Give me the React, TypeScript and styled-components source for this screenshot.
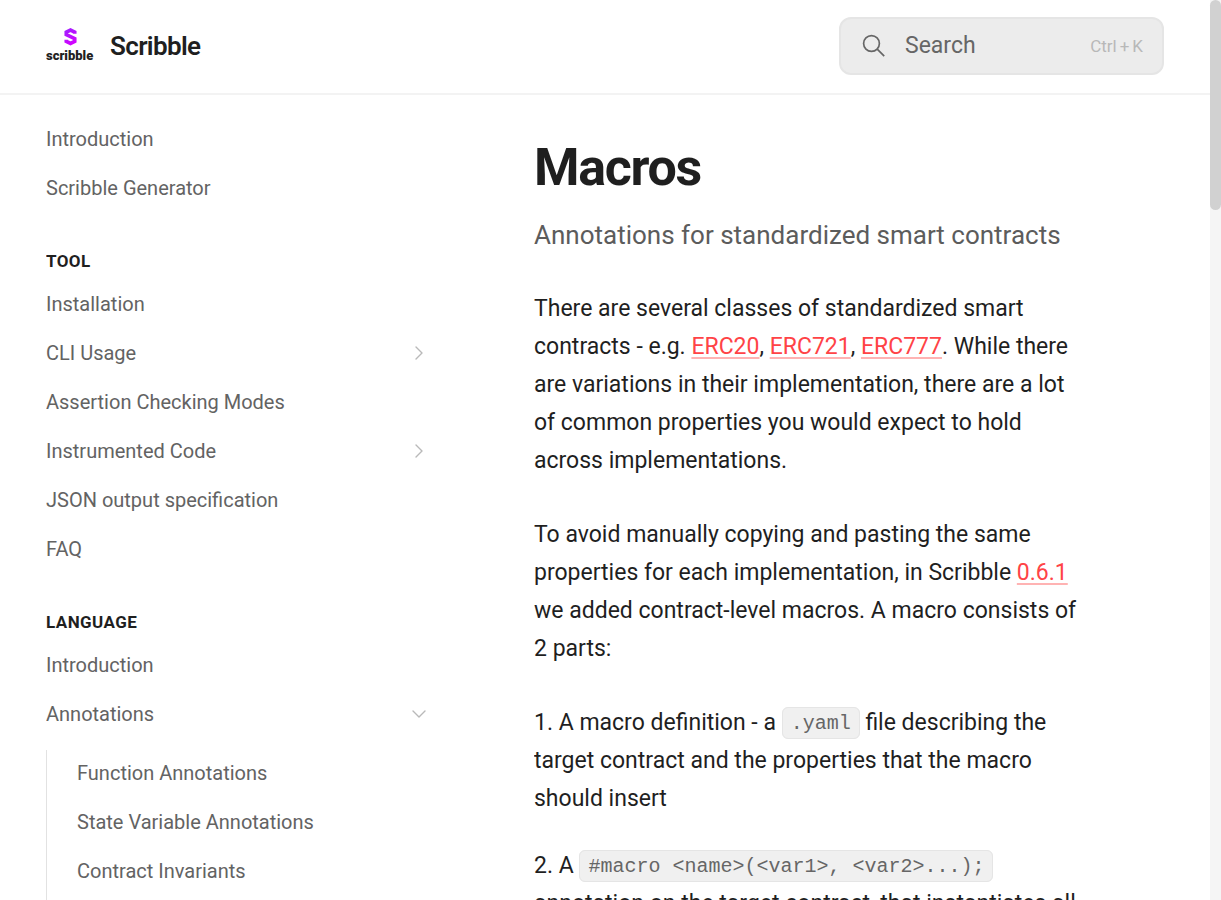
import React from "react";
import styled, { createGlobalStyle } from "styled-components";

const GlobalStyle = createGlobalStyle`
  *, *::before, *::after { box-sizing: border-box; }
  body {
    margin: 0;
    background: #fff;
    color: #1f1f1f;
    font-family: Roboto, sans-serif;
  }
  a { color: inherit; text-decoration: none; }
`;

const Shell = styled.div`
  display: grid;
  grid-template-columns: minmax(0, 1fr) 11px;
  height: 100vh;
`;

const Viewport = styled.div`
  display: flex;
  flex-direction: column;
  min-height: 0;
`;

const ScrollTrack = styled.div`
  background: #f5f5f5;
`;

const ScrollThumb = styled.div`
  height: 210px;
  border-radius: 6px;
  background: #d1d1d1;
`;

const Header = styled.header`
  display: flex;
  flex: none;
  align-items: center;
  justify-content: space-between;
  padding: 17px 46px 18px;
  border-bottom: 2px solid #f3f3f3;
`;

const Brand = styled.a`
  display: flex;
  align-items: center;
  gap: 16px;
`;

const BrandName = styled.span`
  font-size: 26px;
  font-weight: 600;
  line-height: 32px;
  letter-spacing: -0.025em;
`;

const SearchBox = styled.label`
  display: flex;
  align-items: center;
  gap: 19px;
  width: 325px;
  height: 58px;
  padding: 0 19px 0 21px;
  border: 2px solid #e5e5e5;
  border-radius: 12px;
  background: #ececec;
  color: #666;
`;

const SearchInput = styled.input`
  flex: 1;
  min-width: 0;
  padding: 0;
  border: 0;
  outline: 0;
  background: transparent;
  color: inherit;
  font: 23px/32px Roboto, sans-serif;
  &::placeholder { color: #666; opacity: 1; }
`;

const Shortcut = styled.span`
  display: flex;
  gap: 3px;
  color: #b8b8b8;
  font-size: 17px;
  line-height: 24px;
`;

const Body = styled.div`
  display: flex;
  flex: 1;
  gap: 93px;
  min-height: 0;
  padding-left: 46px;
`;

const Sidebar = styled.nav`
  flex: 0 0 395px;
  overflow-y: auto;
  scrollbar-width: none;
  padding-top: 21px;
`;

const Group = styled.section`
  margin-bottom: 35px;
`;

const GroupTitle = styled.h2`
  margin: 0;
  padding: 4px 0 8px;
  font-size: 17px;
  font-weight: 700;
  line-height: 24px;
  letter-spacing: 0.025em;
  text-transform: uppercase;
`;

const NavList = styled.ul`
  display: flex;
  flex-direction: column;
  gap: 4px;
  margin: 0;
  padding: 0;
  list-style: none;
`;

const NavLink = styled.a`
  display: flex;
  align-items: center;
  justify-content: space-between;
  height: 45px;
  padding-right: 14px;
  color: #636363;
  font-size: 20px;
  line-height: 28px;
`;

const SubList = styled(NavList)`
  margin-top: 14px;
  padding: 0 0 12px 30px;
  border-left: 1px solid #e2e2e2;
`;

const Main = styled.main`
  flex: 1;
  min-width: 0;
  overflow-y: auto;
  scrollbar-width: none;
  padding: 40px 46px 0 0;
`;

const Article = styled.article`
  max-width: 556px;
`;

const Title = styled.h1`
  margin: 0;
  font-size: 52px;
  font-weight: 700;
  line-height: 65px;
  letter-spacing: -0.025em;
`;

const Lead = styled.p`
  margin: 15px 0 35px;
  color: #5c5c5c;
  font-size: 26px;
  line-height: 40px;
`;

const Paragraph = styled.p<{ $tight?: boolean }>`
  margin: 0 0 ${(p) => (p.$tight ? 29 : 36)}px;
  font-size: 23px;
  line-height: 38px;
`;

const TextLink = styled.a`
  color: #ff4346;
  text-decoration: underline 2px #ffb3b3;
  text-underline-offset: 3px;
  text-decoration-skip-ink: none;
`;

const Code = styled.code`
  padding: 4px 8px 3px;
  border: 1px solid #e5e5e5;
  border-radius: 6px;
  background: #f0f0f0;
  color: #666;
  font-family: "Liberation Mono", monospace;
  font-size: 20px;
  line-height: 24px;
  vertical-align: 1px;
`;

const Chevron = ({ open }: { open?: boolean }) => (
  <svg width="16" height="16" viewBox="0 0 16 16" fill="none" stroke="#b9b9b9" strokeWidth="1.4" strokeLinecap="round" strokeLinejoin="round" aria-hidden="true">
    <path d={open ? "M2 5l6 6 6-6" : "M5 2l6 6-6 6"} />
  </svg>
);

const Logo = () => (
  <svg width="48" height="48" viewBox="0 0 48 48" role="img" aria-label="Scribble logo">
    <defs>
      <linearGradient id="mark" gradientUnits="userSpaceOnUse" x1="20" y1="7" x2="29" y2="23">
        <stop offset="0" stopColor="#a21fff" />
        <stop offset="1" stopColor="#d800ff" />
      </linearGradient>
    </defs>
    <path d="M28.700 11.800V10.200L24.500 8 20.300 10.200v2.500l8.400 4v2.600l-4.200 2.200-4.200-2.200v-1.600" fill="none" stroke="url(#mark)" strokeWidth="3.700" />
    <text x="0" y="38" fontFamily="Roboto, sans-serif" fontWeight="900" fontSize="13" fill="#222">scribble</text>
  </svg>
);

const SearchIcon = () => (
  <svg width="24" height="24" viewBox="0 0 24 24" fill="none" stroke="#666" strokeWidth="1.700" aria-hidden="true">
    <circle cx="9.500" cy="9.500" r="7.900" />
    <path d="M15.200 15.200l7 7" />
  </svg>
);

type Item = { label: string; expandable?: boolean; children?: string[] };

const groups: { title?: string; items: Item[] }[] = [
  { items: [{ label: "Introduction" }, { label: "Scribble Generator" }] },
  {
    title: "Tool",
    items: [
      { label: "Installation" },
      { label: "CLI Usage", expandable: true },
      { label: "Assertion Checking Modes" },
      { label: "Instrumented Code", expandable: true },
      { label: "JSON output specification" },
      { label: "FAQ" },
    ],
  },
  {
    title: "Language",
    items: [
      { label: "Introduction" },
      {
        label: "Annotations",
        expandable: true,
        children: ["Function Annotations", "State Variable Annotations", "Contract Invariants"],
      },
    ],
  },
];

export default function App() {
  return (
    <>
      <GlobalStyle />
      <Shell>
        <Viewport>
          <Header>
            <Brand href="#">
              <Logo />
              <BrandName>Scribble</BrandName>
            </Brand>
            <SearchBox>
              <SearchIcon />
              <SearchInput type="text" placeholder="Search" aria-label="Search" />
              <Shortcut>
                <span>Ctrl</span>
                <span>+</span>
                <span>K</span>
              </Shortcut>
            </SearchBox>
          </Header>
          <Body>
            <Sidebar aria-label="Documentation">
              {groups.map((group, i) => (
                <Group key={i}>
                  {group.title && <GroupTitle>{group.title}</GroupTitle>}
                  <NavList>
                    {group.items.map((item) => (
                      <li key={item.label}>
                        <NavLink href="#">
                          {item.label}
                          {item.expandable && <Chevron open={!!item.children} />}
                        </NavLink>
                        {item.children && (
                          <SubList>
                            {item.children.map((child) => (
                              <li key={child}>
                                <NavLink href="#">{child}</NavLink>
                              </li>
                            ))}
                          </SubList>
                        )}
                      </li>
                    ))}
                  </NavList>
                </Group>
              ))}
            </Sidebar>
            <Main>
              <Article>
                <Title>Macros</Title>
                <Lead>Annotations for standardized smart contracts</Lead>
                <Paragraph>
                  There are several classes of standardized smart contracts - e.g.{" "}
                  <TextLink href="#">ERC20</TextLink>, <TextLink href="#">ERC721</TextLink>,{" "}
                  <TextLink href="#">ERC777</TextLink>. While there are variations in their
                  implementation, there are a lot of common properties you would expect to hold
                  across implementations.
                </Paragraph>
                <Paragraph>
                  To avoid manually copying and pasting the same properties for each
                  implementation, in Scribble <TextLink href="#">0.6.1</TextLink> we added
                  contract-level macros. A macro consists of 2 parts:
                </Paragraph>
                <Paragraph $tight>
                  1. A macro definition - a <Code>.yaml</Code> file describing the target
                  contract and the properties that the macro should insert
                </Paragraph>
                <Paragraph>
                  2. A <Code>{"#macro <name>(<var1>, <var2>...);"}</Code> annotation on the target
                  contract, that instantiates all
                </Paragraph>
              </Article>
            </Main>
          </Body>
        </Viewport>
        <ScrollTrack>
          <ScrollThumb />
        </ScrollTrack>
      </Shell>
    </>
  );
}
